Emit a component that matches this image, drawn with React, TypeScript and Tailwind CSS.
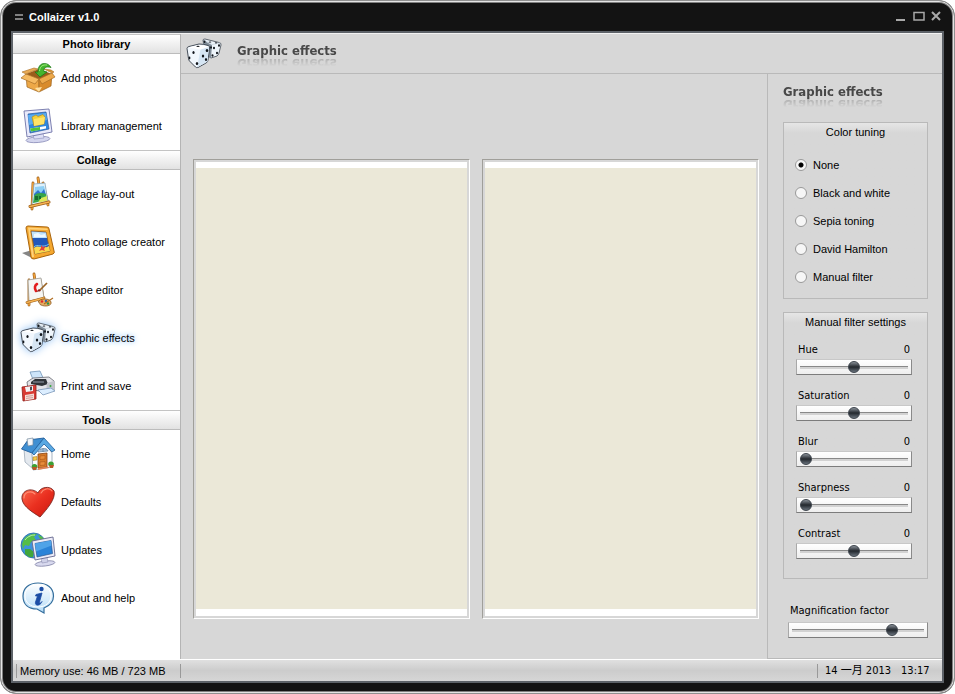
import { useId, useState, type ReactNode } from "react";

function Svg({ children, className = "" }: { children: ReactNode; className?: string }) {
  return (
    <svg viewBox="0 0 36 36" aria-hidden="true" className={`size-9 shrink-0 ${className}`}>
      {children}
    </svg>
  );
}

function BoxIcon() {
  return (
    <Svg>
      <path d="M6 14 19 19V32L7 27Z" fill="#eda847" stroke="#9c6420" strokeWidth=".7" />
      <path d="M19 19 32 14 31 26 19 32Z" fill="#d98b2b" stroke="#9c6420" strokeWidth=".7" />
      <path d="M6 14 19 9 32 14 19 19Z" fill="#9a5c1b" />
      <path d="M6 14 19 19 15 24 1 18Z" fill="#f5ba62" stroke="#a86d24" strokeWidth=".7" />
      <path d="M32 13 19 19 22 24 35 17Z" fill="#eda94b" stroke="#a86d24" strokeWidth=".7" />
      <path d="M6 14 18 9 14 8 2 12Z" fill="#e9ab55" stroke="#a86d24" strokeWidth=".6" />
      <path d="M32 13 24 9 31 10 34 12Z" fill="#dc9839" stroke="#a86d24" strokeWidth=".6" />
      <path d="M15 28 22 27 19 32Z" fill="#ffe0a0" />
      <path d="M15 12 20 17 27 12 24 11.500C23 8 26 6 31 7.500 28 2 18 1 18 12Z" fill="#45b52e" stroke="#1d7a18" strokeWidth=".8" />
      <path d="M19.500 11C20 6 23 4.500 27 5" fill="none" stroke="#9be87d" />
    </Svg>
  );
}

function LibraryIcon() {
  return (
    <Svg>
      <ellipse cx="18" cy="31.500" rx="12" ry="3" fill="#d3d5ee" stroke="#7d80b0" strokeWidth=".7" transform="rotate(-5 18 31.500)" />
      <path d="M13 26 23 25 24 30 14 31Z" fill="#dddff5" stroke="#8b8ebb" strokeWidth=".6" />
      <path d="M4 3 29 1 32 24 7 29Z" fill="#e9eafb" stroke="#6f74a8" strokeWidth=".9" />
      <path d="M8 6 26 4 29 21 10 25Z" fill="#2e86dc" stroke="#29579c" strokeWidth=".7" />
      <path d="M8 7 26 5 27 12 9 17Z" fill="#59abf0" />
      <path d="M12 9 16 7 18 8.500 23 6.500 25 9 24 16 14 18Z" fill="#f4cf38" stroke="#b5860e" strokeWidth=".6" />
      <path d="M14 11 25 9 24 16 14 18Z" fill="#ffe366" />
      <path d="M10 20.500 26 18V20.500L11 23.500Z" fill="#fff" />
      <path d="M10 20.500 20 19V22L11 23.500Z" fill="#53c237" />
    </Svg>
  );
}

function EaselIcon() {
  return (
    <Svg>
      <g fill="none" strokeLinecap="round">
        <path d="M18 2 19 9M13 7 12 33M23 7 28 29" stroke="#9a5d18" strokeWidth="2.800" />
        <path d="M18 2 19 9M13 7 12 33M23 7 28 29" stroke="#f0a13a" strokeWidth="1.700" />
      </g>
      <path d="M14 8 25 7 28 26 12 29Z" fill="#dff1fb" stroke="#7d9db5" strokeWidth=".7" />
      <path d="M15 11 24 10 26 18 14 21Z" fill="#8fd0f5" />
      <path d="M14 18 18 14 21 17 24 13 26 19 14 21Z" fill="#2f74cf" />
      <path d="M14 20C17 16 22 17 26 18L27 24 13 27Z" fill="#35a54a" />
      <path d="M21 22 27 20 27 25 18 26.500Z" fill="#dce95a" />
      <path d="M15 20h3v4h-3zM19 20h2v3h-2z" fill="#176c32" />
      <path d="M10 30.500 29 26" stroke="#9a5d18" strokeWidth="3" strokeLinecap="round" />
      <path d="M10 30.500 29 26" stroke="#f8b453" strokeWidth="1.700" strokeLinecap="round" />
    </Svg>
  );
}

function FrameIcon() {
  return (
    <Svg>
      <path d="M2 29 12 26 30 31 12 34Z" fill="#858585" />
      <path d="M8 2Q6 2 6 4L11 33Q11 35 14 35L33 30Q35 29 34 27L29 5Q29 3 27 3Z" fill="#f5a82f" stroke="#a9650f" strokeWidth="1" />
      <path d="M8 3.500 27 4.500 28 6 10 5.500 14 33 12 33Z" fill="#ffd27a" />
      <path d="M11 7 26 8 30 27 15 30Z" fill="#2158ba" stroke="#93601e" strokeWidth=".8" />
      <path d="M11.500 7.500 26 8.500 27 14 12.500 14Z" fill="#bfe2fa" />
      <path d="M14 10 18 9 21 11 25 10 26 13 14 13Z" fill="#edf8ff" />
      <path d="M14 24C19 20 22 26 29 22L30 27 15 30Z" fill="#f9d94f" />
      <path d="M14 23C17 19 22 25 29 20" stroke="#74c4f0" fill="none" />
      <path d="M21 21 23 23 26 22 24 25 25 27 22 26 19 27 21 24Z" fill="#e2443c" />
    </Svg>
  );
}

function ShapeIcon() {
  return (
    <Svg>
      <g fill="none" strokeLinecap="round">
        <path d="M14 2 15 9M9 8 9 33M20 8 23 26" stroke="#9a5d18" strokeWidth="2.800" />
        <path d="M14 2 15 9M9 8 9 33M20 8 23 26" stroke="#f0a13a" strokeWidth="1.700" />
      </g>
      <path d="M8 8 21 6 24 26 9 29Z" fill="#f6f6f4" stroke="#9a9a94" strokeWidth=".8" />
      <path d="M17 12C15 13 14 16 16 19" fill="none" stroke="#e31d1d" strokeWidth="2.600" strokeLinecap="round" />
      <path d="M19 19 27 11" stroke="#9a6426" strokeWidth="1.700" />
      <path d="M16 20 19 17 21 19Z" fill="#8e1e1e" />
      <path d="M7 30.500 24 26" stroke="#9a5d18" strokeWidth="2.800" strokeLinecap="round" />
      <path d="M7 30.500 24 26" stroke="#f8b453" strokeWidth="1.600" strokeLinecap="round" />
      <path d="M18 30C20 26 30 26 31 30S25 35 21 33 23 31 18 30Z" fill="#e2ad65" stroke="#8e5b20" strokeWidth=".8" />
      <circle cx="22" cy="29.500" r="1.200" fill="#e12626" />
      <circle cx="26" cy="29" r="1.200" fill="#2863ba" />
      <circle cx="28" cy="31.500" r="1.200" fill="#289344" />
      <path d="M24 32 33 26" stroke="#b06c1f" strokeWidth="1.200" />
    </Svg>
  );
}

function DiceIcon({ className = "" }: { className?: string }) {
  return (
    <Svg className={className}>
      <path d="M17 4Q17 3 19 3L33 6.500Q35.500 7 35 9L33 17Q32.500 19 31 20L25 22 19 18Z" fill="#eef5fb" stroke="#3f4852" strokeWidth=".8" />
      <path d="M17 4 26 9 25 22 18 18Z" fill="#7f8c98" />
      <path d="M18 4 26 8.500 34 7" fill="none" stroke="#c3cfda" strokeWidth=".7" />
      <path d="M3 10.500 13 8Q18 8 22 9.500 24 10 23.500 12L22 24Q22 26 20 27L12 31.500Q10.500 32 9.500 31L3.500 25Q2.500 24 2.500 22.500L1 12.500Q1 11 3 10.500Z" fill="#f1f7fd" stroke="#343d48" strokeWidth=".9" />
      <path d="M14.500 13.500 23 11 21.500 25.500 11 31.500Z" fill="#d5e5f3" />
      <path d="M2 11.500 13 9 23 10.500 14.500 13.500Z" fill="#ffffff" />
      <g fill="#11151b">
        <ellipse cx="7.500" cy="16.500" rx="1.100" ry="1.500" />
        <ellipse cx="3.500" cy="22" rx=".9" ry="1.400" />
        <ellipse cx="11" cy="27.500" rx="1.200" ry="1.500" />
        <ellipse cx="21" cy="14.500" rx="1.300" ry="1.600" />
        <ellipse cx="17" cy="20" rx="1.200" ry="1.600" />
        <ellipse cx="20" cy="23.500" rx="1.100" ry="1.500" />
        <ellipse cx="12" cy="10.300" rx="1.700" ry=".6" />
        <ellipse cx="18.500" cy="5.800" rx="1" ry="1.200" />
        <ellipse cx="24" cy="6" rx="1.300" ry=".6" />
        <ellipse cx="30" cy="6.800" rx="1.200" ry=".6" />
        <ellipse cx="33" cy="9.500" rx="1" ry="1.300" />
        <ellipse cx="28" cy="12" rx="1" ry="1.300" />
        <ellipse cx="31" cy="17" rx="1" ry="1.300" />
        <ellipse cx="25" cy="11.500" rx=".9" ry="1.300" />
        <ellipse cx="26.500" cy="19.500" rx="1" ry="1.200" />
      </g>
    </Svg>
  );
}

function PrintIcon() {
  return (
    <Svg>
      <path d="M10 4 20 3 24 12 14 14Z" fill="#cde5fa" stroke="#6288ad" strokeWidth=".7" />
      <path d="M7 14 13 10 29 9 34 13V22L25 24 8 21Z" fill="#e3e4e8" stroke="#63666e" strokeWidth=".8" />
      <path d="M11 14 15 11 26 11 28 16 22 18 11 16Z" fill="#2f3338" />
      <path d="M13 14 24 14" stroke="#747b84" strokeWidth="1.500" />
      <path d="M27 15 34 13V22L26 24Z" fill="#c3c5cc" />
      <circle cx="30.500" cy="18" r="1" fill="#35a939" />
      <path d="M18 22 31 20 35 23 23 27Z" fill="#dceeff" stroke="#6b8bb0" strokeWidth=".7" />
      <path d="M2 19 16 17 16 31 3 33Z" fill="#d83b33" stroke="#8f1e1b" strokeWidth=".8" />
      <path d="M5 19 13 18V23L6 24Z" fill="#f3f3f5" />
      <path d="M10 19 12 18.500V22L10 22.500Z" fill="#494d55" />
      <path d="M5 27 14 25.500V31L5 32.500Z" fill="#f6dbd5" />
      <path d="M6 28.500 13 27.500M6 30.500 13 29.500" stroke="#b67e78" strokeWidth=".6" />
    </Svg>
  );
}

function HomeIcon() {
  return (
    <Svg>
      <path d="M4 13 12 11 13 33 5 26Z" fill="#e4e9ef" stroke="#8292a3" strokeWidth=".6" />
      <path d="M12 18 24 6 32 17V31L13 34Z" fill="#fafcff" stroke="#8292a3" strokeWidth=".7" />
      <path d="M1.500 13 8 4 24 2 12 17Z" fill="#3f8fd2" stroke="#205e9c" strokeWidth=".9" />
      <path d="M7 3 13 2V9L8 10Z" fill="#f4f6f9" stroke="#73889b" strokeWidth=".7" />
      <path d="M12 17 24 2 35 14 32 16 24 8 14 19Z" fill="#5aa8e2" stroke="#205e9c" strokeWidth=".8" />
      <path d="M18 16C19 12 27 11 28 15Z" fill="#bcd8ef" stroke="#57799b" strokeWidth=".7" />
      <path d="M23 12.500V16M20 14H27" stroke="#57799b" strokeWidth=".6" />
      <path d="M18 18 27 17V31L18 32Z" fill="#d77a28" stroke="#844010" strokeWidth=".8" />
      <path d="M20 20 25 19.500V23L20 23.500ZM20 26 25 25.500V29L20 29.500Z" fill="#e88d3a" stroke="#9c4e16" strokeWidth=".5" />
      <path d="M13 21 17 20.500V24L13 24.500Z" fill="#f7c94c" stroke="#9d7315" strokeWidth=".5" />
      <path d="M18 32 28 30.500 29 32 18 34Z" fill="#e18354" />
      <ellipse cx="14.500" cy="30.500" rx="2.800" ry="2.500" fill="#3ca034" />
      <ellipse cx="31" cy="28" rx="2.800" ry="2.500" fill="#3ca034" />
      <path d="M12 31H17L16 34H13ZM29 29H34L33 32H30Z" fill="#b85926" />
    </Svg>
  );
}

function HeartIcon() {
  const id = useId();
  return (
    <Svg>
      <defs>
        <linearGradient id={id} x1="0" y1="0" x2="1" y2="1">
          <stop offset="0" stopColor="#fb6a4e" />
          <stop offset=".5" stopColor="#ea3020" />
          <stop offset="1" stopColor="#c9160d" />
        </linearGradient>
      </defs>
      <path d="M20 33C14 29 3 23 2 15 1 6 12 3 18 9 20 3 30 1 34 7 36 15 27 25 20 33Z" fill={`url(#${id})`} stroke="#7c211b" strokeWidth=".9" />
      <path d="M4 14C4 8 11 6 15 10M21 9C23 5 29 3 32 7" fill="none" stroke="#ff8f76" strokeWidth="1.100" strokeLinecap="round" />
    </Svg>
  );
}

function UpdatesIcon() {
  return (
    <Svg>
      <circle cx="13.500" cy="13.500" r="12.500" fill="#3c93dc" stroke="#23669f" strokeWidth=".8" />
      <path d="M4 7C7 3 13 1 17 2L14 5 16 8 11 10 9 14 5 13 3 17 2 12Z" fill="#55bd48" />
      <path d="M18 3C23 4 25 8 25.500 12L21 9Z" fill="#55bd48" />
      <path d="M5 17 10 17 14 20 13 25 9 25 5 22Z" fill="#41a63c" />
      <path d="M5 8C8 4 12 3 15 3" fill="none" stroke="#b9f0b2" />
      <ellipse cx="25" cy="31.500" rx="10" ry="2.500" fill="#d8d9ee" stroke="#76789e" strokeWidth=".7" transform="rotate(-7 25 31.500)" />
      <path d="M21 26 27 25 28 30 22 31Z" fill="#cfd1e8" stroke="#8587aa" strokeWidth=".5" />
      <path d="M12 9 33 5 35 24 15 28Z" fill="#ececf8" stroke="#65688e" strokeWidth=".9" />
      <path d="M15 11.500 31 8.500 32.500 21.500 17 25Z" fill="#2a83d8" stroke="#29558f" strokeWidth=".7" />
      <path d="M15 11.500 31 8.500 31.500 13.500 16 19.500Z" fill="#4fa3e8" />
    </Svg>
  );
}

function InfoIcon() {
  const id = useId();
  return (
    <Svg>
      <defs>
        <linearGradient id={id} x1="0" y1="0" x2="0" y2="1">
          <stop offset="0" stopColor="#ffffff" />
          <stop offset="1" stopColor="#b4dcf8" />
        </linearGradient>
      </defs>
      <path d="M18 3C27 3 33.500 8 33.500 16 33.500 22 29 26 24 28L24 33 17 29C8 29 3 24 3 16 3 8 9 3 18 3Z" fill={`url(#${id})`} stroke="#336d9c" strokeWidth="1.200" />
      <path d="M18 5C25 5 31 9 31 16 31 22 26 27 18 27 10 27 5 22 5 16 5 9 10 5 18 5Z" fill="none" stroke="#fff" />
      <circle cx="21.500" cy="9" r="2.200" fill="#1c4da5" />
      <path d="M16 14.500 22 13 19.500 22C19 24 21 23 22 21.500 20.500 26 14.500 26.500 15.500 22L17.500 16H15.500Z" fill="#1c4da5" stroke="#1c4da5" strokeWidth=".8" />
    </Svg>
  );
}

const sections = [
  {
    title: "Photo library",
    items: [
      { label: "Add photos", icon: <BoxIcon /> },
      { label: "Library management", icon: <LibraryIcon /> },
    ],
  },
  {
    title: "Collage",
    items: [
      { label: "Collage lay-out", icon: <EaselIcon /> },
      { label: "Photo collage creator", icon: <FrameIcon /> },
      { label: "Shape editor", icon: <ShapeIcon /> },
      {
        label: "Graphic effects",
        active: true,
        icon: <DiceIcon className="drop-shadow-[0_0_4px_#8fc0f4]" />,
      },
      { label: "Print and save", icon: <PrintIcon /> },
    ],
  },
  {
    title: "Tools",
    items: [
      { label: "Home", icon: <HomeIcon /> },
      { label: "Defaults", icon: <HeartIcon /> },
      { label: "Updates", icon: <UpdatesIcon /> },
      { label: "About and help", icon: <InfoIcon /> },
    ],
  },
];

function Sidebar() {
  return (
    <nav className="w-[168px] shrink-0 border-r border-[#b4b4b4] bg-white">
      {sections.map((section) => (
        <section key={section.title}>
          <h2 className="h-5 border-y border-t-[#c4c4c4] border-b-[#bcbcbc] bg-linear-to-b from-white to-[#e2e2e2] text-center text-[11px] leading-[18px] font-bold">
            {section.title}
          </h2>
          <ul>
            {section.items.map((item) => (
              <li key={item.label}>
                <button
                  type="button"
                  className={`flex h-12 w-full items-center gap-[5px] pl-[7px] text-left ${
                    "active" in item ? "[text-shadow:0_0_5px_#8fc0f4,0_0_8px_#b5d6fa]" : ""
                  }`}
                >
                  {item.icon}
                  {item.label}
                </button>
              </li>
            ))}
          </ul>
        </section>
      ))}
    </nav>
  );
}

function Title({ children }: { children: ReactNode }) {
  return (
    <h1 className="font-['DejaVu_Sans_Condensed','DejaVu_Sans',sans-serif] text-[13px] leading-4 font-bold text-[#484848] [-webkit-box-reflect:below_-4px_linear-gradient(transparent_30%,rgba(0,0,0,0.4))]">
      {children}
    </h1>
  );
}

function Photo() {
  return (
    <div className="flex flex-1 border border-t-[#a09f9a] border-r-white border-b-white border-l-[#a09f9a] bg-[#d7d7d7] p-0.5">
      <div className="flex-1 border-t-6 border-b-7 border-white bg-[#ebe8d8]" />
    </div>
  );
}

function Range({ label, start }: { label: string; start: number }) {
  const [value, setValue] = useState(start);
  return (
    <input
      type="range"
      aria-label={label}
      min={0}
      max={100}
      value={value}
      onChange={(e) => setValue(Number(e.target.value))}
      className="block h-4 w-full appearance-none border border-t-[#c8c8c8] border-r-[#8a8a8a] border-b-[#7c7c7c] border-l-[#a8a8a8] bg-linear-to-b from-white to-[#eeeeee] px-[3px] [&::-webkit-slider-runnable-track]:h-[3px] [&::-webkit-slider-runnable-track]:border-t [&::-webkit-slider-runnable-track]:border-[#888888] [&::-webkit-slider-runnable-track]:bg-[#d2d2d2] [&::-webkit-slider-thumb]:mt-[-6px] [&::-webkit-slider-thumb]:size-3 [&::-webkit-slider-thumb]:appearance-none [&::-webkit-slider-thumb]:rounded-full [&::-webkit-slider-thumb]:border [&::-webkit-slider-thumb]:border-[#3d444c] [&::-webkit-slider-thumb]:bg-linear-to-b [&::-webkit-slider-thumb]:from-[#8b929a] [&::-webkit-slider-thumb]:via-[#23282e] [&::-webkit-slider-thumb]:to-[#6a737d]"
    />
  );
}

const tahoma = "font-['DejaVu_Sans_Condensed','DejaVu_Sans',sans-serif]";
const group = "border border-[#b9b9b9] bg-linear-to-b from-[#e6e6e6] to-[#d7d7d7] to-[10px] pl-3 pr-[15px]";
const filters = ["None", "Black and white", "Sepia toning", "David Hamilton", "Manual filter"];
const settings = [
  { label: "Hue", start: 50 },
  { label: "Saturation", start: 50 },
  { label: "Blur", start: 0 },
  { label: "Sharpness", start: 0 },
  { label: "Contrast", start: 50 },
];

function EffectsPanel() {
  const [filter, setFilter] = useState("None");
  return (
    <aside className="w-[175px] shrink-0 border-b border-l border-[#b9b9b9] pt-[10px] pr-[14px] pl-[15px]">
      <Title>Graphic effects</Title>
      <fieldset className={`mt-[22px] h-[177px] ${group}`}>
        <legend className="float-left mb-[10px] w-full pl-[3px] text-center leading-[18px]">Color tuning</legend>
        <div className="clear-both -mx-px">
          {filters.map((name) => (
            <label key={name} className="flex h-7 items-center gap-[6px]">
              <input
                type="radio"
                name="filter"
                checked={filter === name}
                onChange={() => setFilter(name)}
                className="size-3 appearance-none rounded-full border border-[#999999] bg-[#f6f6f6] checked:bg-[radial-gradient(circle,#000000_2px,#f6f6f6_3px)]"
              />
              {name}
            </label>
          ))}
        </div>
      </fieldset>
      <section className={`mt-[13px] h-[267px] ${group}`}>
        <h2 className="pl-[3px] text-center leading-[18px]">Manual filter settings</h2>
        <div className="flex flex-col gap-3 pt-[10px]">
          {settings.map((s) => (
            <div key={s.label}>
              <div className={`flex h-[18px] justify-between px-[2px] leading-[18px] ${tahoma}`}>
                <span>{s.label}</span>
                <span>0</span>
              </div>
              <Range label={s.label} start={s.start} />
            </div>
          ))}
        </div>
      </section>
      <div className={`mt-[23px] ml-[5px] ${tahoma}`}>
        <div className="h-5 px-[2px] leading-[18px]">Magnification factor</div>
        <Range label="Magnification factor" start={78} />
      </div>
    </aside>
  );
}

export default function App() {
  return (
    <div className="flex min-h-screen flex-col rounded-2xl border border-[#8f8f8f] bg-[#131313] px-[10px] pb-[10px] font-['Liberation_Sans',Arial,'Noto_Sans_CJK_SC',sans-serif] text-[11px] text-black shadow-[inset_0_0_0_1px_#e4e4e4,inset_0_0_0_2px_#808080]">
      <header className="flex h-[30px] items-center gap-[6px] pt-[2px] pl-1 text-white">
        <svg viewBox="0 0 8 6" aria-hidden="true" className="h-[6px] w-2">
          <path d="M0 1H8M0 5H8" stroke="#a5a5a5" strokeWidth="1.500" />
        </svg>
        <span className="flex-1 font-bold">Collaizer v1.0</span>
        <div className="flex gap-1 text-[#a9a9a9]">
          <button type="button" aria-label="Minimize">
            <svg viewBox="0 0 14 12" className="h-3 w-[14px]">
              <path d="M2 9H11" stroke="currentColor" strokeWidth="2" />
            </svg>
          </button>
          <button type="button" aria-label="Maximize">
            <svg viewBox="0 0 14 12" className="h-3 w-[14px]">
              <path d="M2 1.500H12V9H2Z" fill="none" stroke="currentColor" strokeWidth="1.500" />
            </svg>
          </button>
          <button type="button" aria-label="Close">
            <svg viewBox="0 0 14 12" className="h-3 w-[14px]">
              <path d="M2 1 10 9M10 1 2 9" stroke="currentColor" strokeWidth="2" />
            </svg>
          </button>
        </div>
      </header>

      <div className="flex flex-1 flex-col border-2 border-[#5d6268] bg-[#d7d7d7]">
        <div className="flex flex-1 border-t border-[#f2f2f2]">
          <Sidebar />
          <main className="flex flex-1 flex-col">
            <div className="flex h-10 items-center gap-[15px] border-b border-[#b9b9b9] pl-[5px]">
              <DiceIcon />
              <div className="pb-[6px]">
                <Title>Graphic effects</Title>
              </div>
            </div>
            <div className="flex flex-1">
              <div className="flex flex-1 gap-3 pt-[85px] pr-2 pb-10 pl-3">
                <Photo />
                <Photo />
              </div>
              <EffectsPanel />
            </div>
          </main>
        </div>
        <footer className="flex h-[22px] items-center border-t border-white bg-linear-to-b from-[#e0e0e0] via-[#cccccc] to-[#d6d6d6]">
          <div className="ml-[3px] w-[165px] border-x border-[#999999] pl-[3px] leading-[14px]">
            Memory use: 46 MB / 723 MB
          </div>
          <div
            className={`ml-auto flex w-[125px] gap-[10px] border-l border-[#999999] pl-[7px] leading-[14px] font-['DejaVu_Sans_Condensed','Noto_Sans_CJK_SC',sans-serif]`}
          >
            <span>14 一月 2013</span>
            <span>13:17</span>
          </div>
        </footer>
      </div>
    </div>
  );
}
